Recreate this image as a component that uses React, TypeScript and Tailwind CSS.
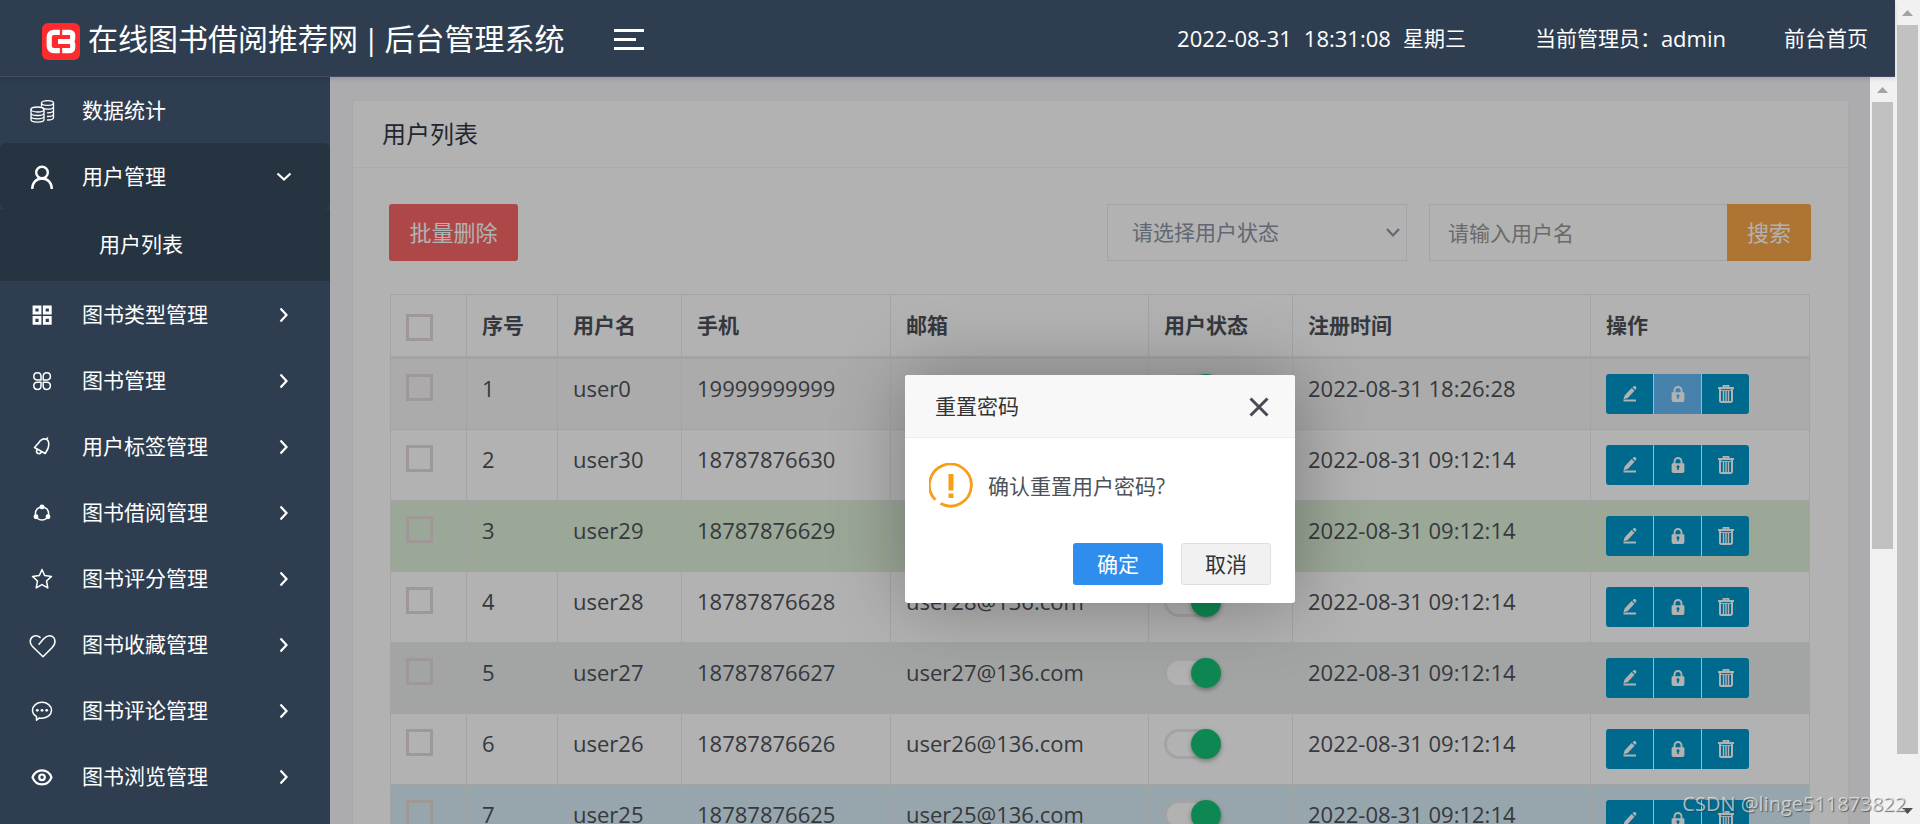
import React from "react";

type IconProps = { children: React.ReactNode; width?: number };

function MenuSvg({ children, width = 1 }: IconProps) {
  return (
    <svg
      viewBox="0 0 28 28"
      className="h-7 w-7 shrink-0"
      fill="none"
      stroke="currentColor"
      strokeWidth={width}
      strokeLinecap="round"
      strokeLinejoin="round"
      aria-hidden="true"
    >
      {children}
    </svg>
  );
}

const coins = (
  <MenuSvg width={1.3}>
    <ellipse cx="19.5" cy="6" rx="6" ry="2.4" />
    <path d="M13.5 6v3M25.5 6v14.5c0 1.4-2.5 2.5-6 2.5M25.5 9.700c0 1.400-2.700 2.500-6 2.500-2 0-3.700-.3-4.800-.9M25.500 13.300c0 1.400-2.700 2.500-6 2.500M25.500 17c0 1.400-2.700 2.500-6 2.500" />
    <ellipse cx="9.500" cy="12.500" rx="6.500" ry="2.500" />
    <path d="M3 12.500v10c0 1.400 2.900 2.600 6.500 2.600s6.500-1.200 6.500-2.600v-10M3 16c0 1.400 2.900 2.500 6.500 2.500s6.500-1.100 6.500-2.500M3 19.300c0 1.400 2.900 2.500 6.500 2.500s6.500-1.100 6.500-2.500" />
  </MenuSvg>
);
const user = (
  <MenuSvg width={2.4}>
    <circle cx="14" cy="9.500" r="5.800" />
    <path d="M4.200 26c0-6.200 4.200-10.500 9.800-10.500S23.800 19.800 23.800 26" strokeLinecap="butt" />
  </MenuSvg>
);
const grid = (
  <MenuSvg width={2.8}>
    <path d="M6 6h6v6H6zM16.300 6h6v6h-6zM6 16.300h6v6H6zM16.300 16.300h6v6h-6z" strokeLinejoin="miter" />
  </MenuSvg>
);
const clover = (
  <MenuSvg width={1.5}>
    <path d="M13 13H9.200A3.600 3.600 0 1 1 13 9.300zM15.200 13V9.300A3.600 3.600 0 1 1 18.900 13zM13 15.200v3.700a3.600 3.600 0 1 1-3.800-3.700zM15.200 15.200h3.700a3.600 3.600 0 1 1-3.700 3.700z" />
  </MenuSvg>
);
const bell = (
  <MenuSvg width={1.6}>
    <path d="M6.500 14.500l10.700 6 2.800-5c.9-2.200 1.100-4 .6-6.300-.3-1.300-1-2.300-2.200-2.900-1.300-.6-2.700-.6-4 0-1.700.9-2.900 2-4.100 4zM18.600 6.400l.9-1.400M8.700 17.200c-.5 1.500.1 2.700 1.300 3.200 1 .5 2.300.2 3-.9" />
  </MenuSvg>
);
const share = (
  <MenuSvg width={1.5}>
    <circle cx="14" cy="14.500" r="6.600" />
    <circle cx="14" cy="7.900" r="1.700" fill="currentColor" />
    <circle cx="8" cy="17.800" r="1.700" fill="currentColor" />
    <circle cx="20" cy="17.800" r="1.700" fill="currentColor" />
  </MenuSvg>
);
const star = (
  <MenuSvg width={1.500}>
    <path d="M14 4.500l2.700 6.100 6.800.8-5 4.600 1.300 6.900-5.800-3.300-5.800 3.300L9.500 16l-5-4.600 6.800-.8z" />
  </MenuSvg>
);
const heart = (
  <MenuSvg width={1.600}>
    <path d="M11 13.200l4.400-5.200c2-2.200 4.100-3.500 6.400-3.300 3 .2 5.200 2.800 5.200 6 0 2.400-1.300 4.200-2.800 5.800L15 25.700 4.500 15.500C3 14 2.200 12.500 2.200 10.600c0-3.300 2.500-5.900 5.600-5.900 1.900 0 3.200.8 4.200 1.700" />
  </MenuSvg>
);
const comment = (
  <MenuSvg width={1.500}>
    <path d="M8.500 23.200v-3.700c-2.500-1.300-4-3.600-4-6.200 0-4.500 4.300-8 9.500-8s9.500 3.500 9.500 8-4.300 7.900-9.500 7.900c-.9 0-1.700-.1-2.500-.3z" />
    <g fill="currentColor" stroke="none">
      <circle cx="9.300" cy="13.300" r="1.400" />
      <circle cx="14" cy="13.300" r="1.400" />
      <circle cx="18.700" cy="13.300" r="1.400" />
    </g>
  </MenuSvg>
);
const eye = (
  <MenuSvg width={2.200}>
    <path d="M4.500 14.300c1.800-4.600 5.300-7 9.500-7s7.700 2.400 9.500 7c-1.800 4.600-5.300 7-9.500 7s-7.700-2.400-9.500-7z" />
    <circle cx="14" cy="14.300" r="2.800" />
  </MenuSvg>
);

function Chevron({ down = false }: { down?: boolean }) {
  return (
    <svg viewBox="0 0 20 20" className="h-5 w-5 shrink-0" fill="none" stroke="currentColor" strokeWidth="2.2" aria-hidden="true">
      {down ? <path d="M3.500 6.500l6.500 6 6.500-6" /> : <path d="M6.500 3.500l6 6.500-6 6.500" />}
    </svg>
  );
}

const menu: { label: string; icon: React.ReactNode; children?: string[]; leaf?: boolean }[] = [
  { label: "数据统计", icon: coins, leaf: true },
  { label: "用户管理", icon: user, children: ["用户列表"] },
  { label: "图书类型管理", icon: grid },
  { label: "图书管理", icon: clover },
  { label: "用户标签管理", icon: bell },
  { label: "图书借阅管理", icon: share },
  { label: "图书评分管理", icon: star },
  { label: "图书收藏管理", icon: heart },
  { label: "图书评论管理", icon: comment },
  { label: "图书浏览管理", icon: eye },
];

const rows = [
  { id: 1, name: "user0", phone: "19999999999", time: "2022-08-31 18:26:28", bg: "bg-[#f5f5f5]" },
  { id: 2, name: "user30", phone: "18787876630", time: "2022-08-31 09:12:14", bg: "" },
  { id: 3, name: "user29", phone: "18787876629", time: "2022-08-31 09:12:14", bg: "bg-[#dff0d8]" },
  { id: 4, name: "user28", phone: "18787876628", time: "2022-08-31 09:12:14", bg: "" },
  { id: 5, name: "user27", phone: "18787876627", time: "2022-08-31 09:12:14", bg: "bg-[#eaeded]" },
  { id: 6, name: "user26", phone: "18787876626", time: "2022-08-31 09:12:14", bg: "" },
  { id: 7, name: "user25", phone: "18787876625", time: "2022-08-31 09:12:14", bg: "bg-[#d9edf7]" },
];

function Header() {
  return (
    <header className="relative z-20 flex h-[77px] shrink-0 items-center border-b border-[#454a66] bg-[#2e3e50] pr-[27px] pl-[42px] text-[21px] leading-[30px] text-white shadow-[0_2px_4px_rgba(0,0,0,0.12)]">
      <div className="flex items-center gap-2 pt-[6px]">
        <svg viewBox="0 0 38 37" className="h-[37px] w-[38px]" aria-hidden="true">
          <rect width="38" height="37" rx="6" fill="#fd2b2d" />
          <path
            d="M17.800 9.300H11.800a4.600 4.600 0 0 0-4.600 4.600v9.200a4.600 4.600 0 0 0 4.600 4.600h6M20.200 9.300h7.500a3 3 0 0 1 3 3v3.200a3 3 0 0 1-3 3H16M27.700 18.500a3 3 0 0 1 3 3v3.200a3 3 0 0 1-3 3h-7.500"
            fill="none"
            stroke="#fff"
            strokeWidth="5.200"
          />
        </svg>
        <h1 className="pb-1 text-[30px] leading-[36px] whitespace-nowrap">
          在线图书借阅推荐网<span className="mx-[5px]">|</span>后台管理系统
        </h1>
      </div>
      <button type="button" aria-label="切换侧边栏" className="ml-[50px] flex flex-col gap-1.5 pt-[2px]">
        <span className="h-[3px] w-[30px] bg-white" />
        <span className="h-[3px] w-[22px] bg-white" />
        <span className="h-[3px] w-[30px] bg-white" />
      </button>
      <div className="ml-auto flex items-center whitespace-nowrap">
        <div className="flex gap-3">
          <span className="text-[22px]">2022-08-31</span>
          <span className="text-[22px]">18:31:08</span>
          <span>星期三</span>
        </div>
        <div className="ml-[69px] flex">
          <span>当前管理员：</span>
          <span className="text-[22px]">admin</span>
        </div>
        <a href="#home" className="ml-[58px]">前台首页</a>
      </div>
    </header>
  );
}

function Sidebar() {
  return (
    <aside className="z-10 w-[330px] shrink-0 bg-[#2e3e50] text-[21px] text-white">
      <nav>
        <ul>
          {menu.map((m) => (
            <li key={m.label}>
              <a
                href="#menu"
                className={"flex h-[66px] items-center pt-[2px] pr-9 pl-7" + (m.children ? " rounded-md bg-[#263442]" : "")}
              >
                {m.icon}
                <span className="ml-[26px] flex-1">{m.label}</span>
                {!m.leaf && <Chevron down={!!m.children} />}
              </a>
              {m.children && (
                <ul className="bg-[#263442]">
                  {m.children.map((c) => (
                    <li key={c}>
                      <a href="#users" className="flex h-[72px] items-center pl-[99px]">{c}</a>
                    </li>
                  ))}
                </ul>
              )}
            </li>
          ))}
        </ul>
      </nav>
    </aside>
  );
}

function Check({ label }: { label: string }) {
  return (
    <input
      type="checkbox"
      aria-label={label}
      className="block h-[27px] w-[27px] appearance-none border-[3px] border-[#e2dbd9] bg-transparent"
    />
  );
}

function Toggle({ label }: { label: string }) {
  return (
    <label className="relative block h-[30px] w-[57px]">
      <input
        type="checkbox"
        defaultChecked
        aria-label={label}
        className="peer block h-full w-full appearance-none rounded-full border-[3px] border-[#eaeaea] bg-white"
      />
      <span className="absolute top-0 right-0 h-[30px] w-[30px] rounded-full bg-[#15c377] shadow-[0_2px_5px_rgba(0,0,0,0.35)]" />
    </label>
  );
}

function Actions({ active }: { active: boolean }) {
  const base = "flex h-10 w-[47px] items-center justify-center";
  return (
    <div className="flex w-fit gap-px overflow-hidden rounded-[3px] bg-white text-white">
      <button type="button" aria-label="编辑" className={base + " bg-[#0099cc]"}>
        <svg viewBox="0 0 16 16" className="h-4 w-4" fill="currentColor" aria-hidden="true">
          <path d="M1.500 13.500h12.500v2H1.500zM2.600 9.600l7-7.500 2.900 2.700-6.700 7.200-4.300 1.200zM10.500 1.300l.8-.8c.8-.7 1.800-.7 2.500 0s.8 1.800.1 2.600l-.8.800z" />
        </svg>
      </button>
      <button type="button" aria-label="重置密码" className={base + (active ? " bg-[#65bbf6]" : " bg-[#0099cc]")}>
        <svg viewBox="0 0 16 16" className="h-4 w-4" aria-hidden="true">
          <path d="M4.500 7V4.500a3.500 3.500 0 0 1 7 0V7" fill="none" stroke="currentColor" strokeWidth="1.900" />
          <path
            fillRule="evenodd"
            fill="currentColor"
            d="M2.600 6.200h10.800a1 1 0 0 1 1 1V14a2 2 0 0 1-2 2H3.600a2 2 0 0 1-2-2V7.200a1 1 0 0 1 1-1zM8 8.300a1.500 1.500 0 0 0-.8 2.800v2h1.600v-2A1.500 1.500 0 0 0 8 8.300z"
          />
        </svg>
      </button>
      <button type="button" aria-label="删除" className={base + " bg-[#0099cc]"}>
        <svg viewBox="0 0 16 20" className="h-5 w-4" fill="none" stroke="currentColor" aria-hidden="true">
          <path d="M0 4h16" strokeWidth="2.200" />
          <path d="M5.500 3V1.800h5V3" strokeWidth="1.800" />
          <path d="M2 5v11.500a1.500 1.500 0 0 0 1.500 1.500h9a1.500 1.500 0 0 0 1.500-1.500V5" strokeWidth="2" />
          <path d="M2 6.400h12" strokeWidth="1" />
          <path d="M5.500 7v10M8 7v10M10.500 7v10" strokeWidth="1.400" />
        </svg>
      </button>
    </div>
  );
}

const heads = ["序号", "用户名", "手机", "邮箱", "用户状态", "注册时间", "操作"];
const td = "border border-[#eaeded] px-[15px] py-[15px] align-top";

function UserTable() {
  return (
    <div className="mx-px mt-[33px]">
      <table className="w-full table-fixed border-collapse text-left text-[22px] leading-[28px] text-[#4d5259]">
        <colgroup>
          <col className="w-[76px]" />
          <col className="w-[91px]" />
          <col className="w-[124px]" />
          <col className="w-[209px]" />
          <col />
          <col className="w-[144px]" />
          <col className="w-[298px]" />
          <col className="w-[219px]" />
        </colgroup>
        <thead>
          <tr className="h-[63px] border-b-[3px] border-[#eaeded] text-[21px]">
            <th className="border-x border-t border-[#eaeded] px-[15px] pb-[15px] align-bottom">
              <Check label="全选" />
            </th>
            {heads.map((h) => (
              <th key={h} className="border-x border-t border-[#eaeded] px-[15px] pb-[17px] align-bottom font-bold">
                {h}
              </th>
            ))}
          </tr>
        </thead>
        <tbody>
          {rows.map((r) => (
            <tr key={r.id} className={r.bg}>
              <td className={td}><Check label={"选择 " + r.name} /></td>
              <td className={td}>{r.id}</td>
              <td className={td}>{r.name}</td>
              <td className={td}>{r.phone}</td>
              <td className={td}>{r.name}@136.com</td>
              <td className={td}><Toggle label={r.name + " 状态"} /></td>
              <td className={td}>{r.time}</td>
              <td className={td}><Actions active={r.id === 1} /></td>
            </tr>
          ))}
        </tbody>
      </table>
    </div>
  );
}

function Dialog() {
  return (
    <div className="absolute inset-0 flex items-center justify-center bg-black/30">
      <div
        role="dialog"
        aria-labelledby="dialog-title"
        className="w-[390px] overflow-hidden rounded-[3px] bg-white text-[21px] leading-[30px] shadow-[1px_1px_75px_rgba(0,0,0,0.3)]"
      >
        <div className="flex h-[63px] items-center justify-between border-b border-[#eee] bg-[#f8f8f8] pr-[26px] pl-[30px] text-[#333]">
          <h2 id="dialog-title">重置密码</h2>
          <button type="button" aria-label="关闭" className="pt-[2px]">
            <svg viewBox="0 0 20 20" className="h-5 w-5" fill="none" stroke="#4a4a54" strokeWidth="3" aria-hidden="true">
              <path d="M1.500 1.500l17 17M18.500 1.500l-17 17" />
            </svg>
          </button>
        </div>
        <div className="flex items-center gap-[14px] pt-[25px] pl-6 text-[#4d5259]">
          <svg viewBox="0 0 45 45" className="h-[45px] w-[45px]" fill="none" stroke="#f79d16" aria-hidden="true">
            <path d="M6.300 36.700A21 21 0 1 1 11.500 40.600" strokeWidth="2.800" />
            <path d="M22 11v16.500M22 30.500v4.500" strokeWidth="5" />
          </svg>
          <p>确认重置用户密码?</p>
        </div>
        <div className="flex justify-end gap-[18px] px-6 pt-[35px] pb-[18px]">
          <button type="button" className="h-[42px] w-[90px] rounded-[3px] bg-[#2e8ded] text-white">确定</button>
          <button type="button" className="h-[42px] w-[90px] rounded-[3px] border border-[#dedede] bg-[#f1f1f1] text-[#333]">取消</button>
        </div>
      </div>
    </div>
  );
}

function Scrollbar({ thumb, down = false }: { thumb: string; down?: boolean }) {
  return (
    <div aria-hidden="true" className="flex w-[25px] shrink-0 flex-col items-center bg-[#f1f1f1]">
      <svg viewBox="0 0 25 25" className="h-[25px] w-[25px] shrink-0"><path d="M7 16l5.500-6 5.500 6z" fill="#a3a3a3" /></svg>
      <div className={"w-[21px] bg-[#c1c1c1] " + thumb} />
      {down && (
        <svg viewBox="0 0 25 25" className="mt-auto h-[25px] w-[25px] shrink-0"><path d="M7 9l5.500 6L18 9z" fill="#505050" /></svg>
      )}
    </div>
  );
}

export default function App() {
  return (
    <div lang="zh-CN" className="relative flex h-screen overflow-hidden font-['Open_Sans','Noto_Sans_CJK_SC',sans-serif]">
      <div className="flex min-w-0 flex-1 flex-col">
        <Header />
        <div className="flex h-screen shrink-0">
          <Sidebar />
          <main className="relative min-w-0 flex-1 overflow-hidden bg-[#f6f6f9] pt-6 pr-[22px] pl-[23px]">
            <section className="bg-white shadow-[0_0_2px_rgba(0,0,0,0.05)]">
              <h2 className="flex h-[67px] items-center border-b border-[#f4f5f5] pl-[29px] text-[24px] text-[#313944]">用户列表</h2>
              <div className="pt-9 pr-[37px] pb-9 pl-9">
                <div className="flex">
                  <button type="button" className="h-[57px] w-[129px] rounded-[3px] bg-[#f96868] pb-px text-[22px] text-white">批量删除</button>
                  <form className="ml-auto flex" onSubmit={(e) => e.preventDefault()}>
                    <div className="relative mr-[22px]">
                      <select aria-label="用户状态" className="h-[57px] w-[300px] appearance-none border border-[#ebebeb] bg-white px-6 text-[21px] text-[#8b95a5]">
                        <option>请选择用户状态</option>
                      </select>
                      <svg viewBox="0 0 14 14" className="pointer-events-none absolute top-[21px] right-[7px] h-3.5 w-3.5" fill="none" stroke="#8b95a5" strokeWidth="2.200" aria-hidden="true">
                        <path d="M1 4l6 6.500L13 4" />
                      </svg>
                    </div>
                    <input type="text" aria-label="用户名" placeholder="请输入用户名" className="h-[57px] w-[298px] border border-r-0 border-[#ebebeb] px-[18px] text-[21px] placeholder:text-[#999]" />
                    <button type="submit" className="h-[57px] w-[84px] rounded-r-[3px] bg-[#faa64b] text-[22px] text-white">搜索</button>
                  </form>
                </div>
                <UserTable />
              </div>
            </section>
            <Dialog />
          </main>
          <Scrollbar thumb="h-[447px]" />
        </div>
      </div>
      <Scrollbar thumb="h-[729px]" down />
      <div className="absolute right-3.5 bottom-[5px] z-30 text-[20px] leading-[30px] text-white/60 [text-shadow:1px_1px_1px_rgba(60,60,60,0.7)]">
        CSDN @linge511873822
      </div>
    </div>
  );
}
